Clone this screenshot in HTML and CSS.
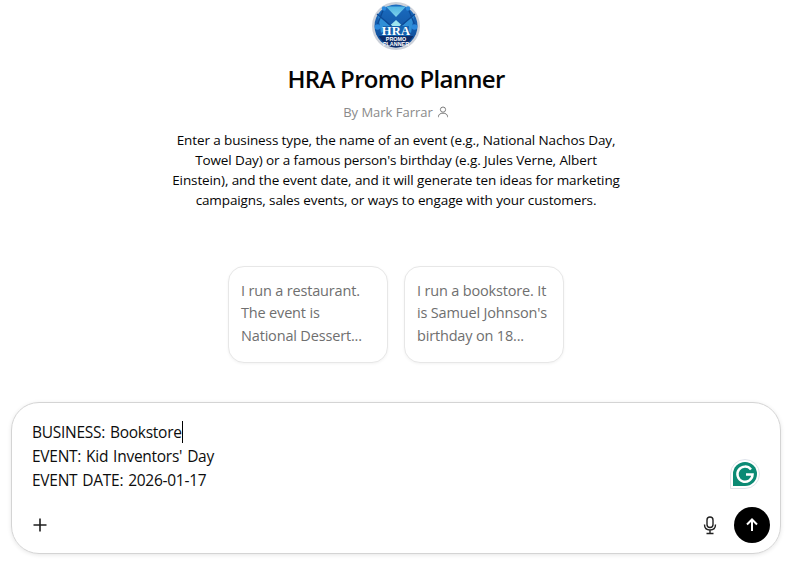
FILE: index.html
```html
<!DOCTYPE html>
<html lang="en">
<head>
<meta charset="utf-8">
<title>HRA Promo Planner</title>
<link rel="stylesheet" href="styles.css">
</head>
<body>
<main class="page">
  <header class="intro">
    <svg class="logo" width="48" height="48" viewBox="0 0 48 48" aria-hidden="true">
      <defs>
        <linearGradient id="disc" x1="0" y1="0" x2="0" y2="1"><stop offset="0" stop-color="#1a6cc0"/><stop offset="1" stop-color="#0f4a94"/></linearGradient>
        <linearGradient id="mail" x1="0" y1="0" x2="0" y2="1"><stop offset="0" stop-color="#4fb4e4"/><stop offset="1" stop-color="#7fd2ea"/></linearGradient>
      </defs>
      <circle cx="24" cy="24" r="24" fill="#ccd1da"/>
      <circle cx="24" cy="24" r="21.500" fill="url(#disc)"/>
      <path d="M14 4.500 H34 L24 15Z" fill="url(#mail)"/>
      <path d="M6 13 L18 24 L9 31Z M42 13 L30 24 L39 31Z" fill="#2f8fd6"/>
      <path d="M24 18 L36 29 H12Z" fill="#a0e6ef"/>
      <path d="M12 6 L4.500 25 M36 6 L43.500 25 M5 12 L24 28 L43 12" stroke="#0c4a96" stroke-width="1.300" fill="none"/>
      <circle cx="12" cy="6.500" r="2.200" fill="#2a88dc"/><circle cx="36" cy="6.500" r="2.200" fill="#2a88dc"/>
      <circle cx="5.500" cy="25" r="2.800" fill="#2a88dc"/><circle cx="42.500" cy="25" r="2.800" fill="#2a88dc"/>
      <rect x="11" y="24" width="26" height="10" fill="#1463b0"/>
      <path d="M6.500 34 H41.500 Q34 45.500 24 45.500 Q14 45.500 6.500 34Z" fill="#0c2c68"/>
      <text class="logo-hra" x="24" y="32.500" text-anchor="middle">HRA</text>
      <text class="logo-sub" x="24" y="39.200" text-anchor="middle">PROMO</text>
      <text class="logo-sub" x="24" y="44" text-anchor="middle">PLANNER</text>
    </svg>
    <h1 class="title">HRA Promo Planner</h1>
    <p class="byline">By Mark Farrar
      <svg class="byline-icon" width="12" height="12" viewBox="0 0 12 12" aria-hidden="true"><circle cx="6" cy="3.600" r="2.600"/><path d="M1.500 11.200v-.8c0-2 1.800-3.200 4.500-3.200s4.500 1.200 4.500 3.200v.8"/></svg>
    </p>
    <p class="description">Enter a business type, the name of an event (e.g., National Nachos Day, Towel Day) or a famous person's birthday (e.g. Jules Verne, Albert Einstein), and the event date, and it will generate ten ideas for marketing campaigns, sales events, or ways to engage with your customers.</p>
  </header>

  <section class="starters">
    <button class="starter" type="button"><span class="starter-text">I run a restaurant.<br>The event is<br>National Dessert...</span></button>
    <button class="starter" type="button"><span class="starter-text">I run a bookstore. It<br>is Samuel Johnson's<br>birthday on 18...</span></button>
  </section>

  <section class="composer">
    <div class="composer-text">
      <div><span class="caret-wrap">BUSINESS: Bookstore</span></div>
      <div>EVENT: Kid Inventors' Day</div>
      <div>EVENT DATE: 2026-01-17</div>
    </div>
    <div class="composer-bar">
      <svg class="plus" width="18" height="18" viewBox="0 0 18 18" aria-hidden="true"><path d="M9 2.500v13M2.500 9h13"/></svg>
      <div class="composer-actions">
        <svg class="mic" width="16" height="20" viewBox="0 0 16 20" aria-hidden="true"><rect x="5" y="2" width="6" height="10.500" rx="3"/><path d="M2.500 9.500c0 3.400 2.300 5.500 5.500 5.500s5.500-2.100 5.500-5.500M8 15v3M4.500 18.500h7"/></svg>
        <span class="send"><svg width="16" height="16" viewBox="0 0 16 16" aria-hidden="true"><path d="M8 14V2.500M3 7.500l5-5 5 5"/></svg></span>
      </div>
    </div>
    <span class="grammarly">
      <svg width="30" height="30" viewBox="0 0 30 30" aria-hidden="true">
        <path d="M15 .5A14.500 14.500 0 1 1 15 29.500H.5V15A14.500 14.500 0 0 1 15 .5Z" fill="#fff" stroke="#dfe3ea"/>
        <path d="M15 3A12 12 0 1 1 15 27H3V15A12 12 0 0 1 15 3Z" fill="#0b8a74"/>
        <path d="M21 10.500A7.600 7.600 0 1 0 22.600 15.500H16" fill="none" stroke="#fff" stroke-width="2.400"/>
      </svg>
    </span>
  </section>
</main>
</body>
</html>
```
FILE: styles.css
```css
* { box-sizing: border-box; }
html, body { margin: 0; height: 100%; background: #fff; }
body { font-family: "Open Sans", "Noto Sans", "Liberation Sans", sans-serif; color: #0d0d0d; overflow: hidden; }
.page { width: 787px; height: 561px; display: flex; flex-direction: column; align-items: center; padding: 2px 6px 7px 11px; }
.intro { flex: none; width: 450px; display: flex; flex-direction: column; align-items: center; text-align: center; }
.logo { display: block; }
.logo-hra { font: 700 12.500px "Liberation Serif", serif; fill: #fff; letter-spacing: .3px; }
.logo-sub { font: 700 5.400px "Liberation Sans", sans-serif; fill: #fff; }
.title { margin: 13px 0 0; font-size: 24px; line-height: 32px; font-weight: 600; letter-spacing: -.7px; color: #050505; }
.byline { margin: 7px 0 0; font-size: 13px; line-height: 20px; color: #8a8a8a; letter-spacing: -.02px; display: flex; align-items: center; gap: 4px; }
.byline-icon { fill: none; stroke: #7d7d7d; stroke-width: 1; }
.description { margin: 8px 0 0; font-size: 13.500px; line-height: 20px; letter-spacing: -.11px; color: #050505; }
.starters { flex: none; margin-top: 56px; display: flex; gap: 16px; }
.starter { width: 160px; height: 97px; padding: 12px 12px 14px; text-align: left; background: #fff; border: 1px solid #e7e7e7; border-radius: 16px; box-shadow: 0 1px 3px rgba(0,0,0,.05); font: inherit; }
.starter-text { display: block; font-size: 14.500px; line-height: 22.500px; letter-spacing: -.17px; color: #6f6f6f; white-space: nowrap; }
.composer { flex: none; position: relative; margin-top: 39px; width: 770px; height: 152px; border: 1px solid #d4d4d4; border-radius: 28px; box-shadow: 0 1px 4px rgba(0,0,0,.1); padding: 17px 10px 10px 20px; display: flex; flex-direction: column; justify-content: space-between; }
.composer-text { font-size: 15.500px; line-height: 24px; letter-spacing: -.27px; word-spacing: 1.200px; color: #0d0d0d; }
.caret-wrap { border-right: 1px solid #000; }
.composer-bar { display: flex; align-items: center; justify-content: space-between; }
.plus { margin-left: -1px; fill: none; stroke: #1f1f1f; stroke-width: 1.600; }
.composer-actions { display: flex; align-items: center; gap: 16px; }
.mic { fill: none; stroke: #222; stroke-width: 1.400; }
.send { width: 36px; height: 36px; border-radius: 50%; background: #000; display: flex; align-items: center; justify-content: center; }
.send svg { fill: none; stroke: #fff; stroke-width: 2; }
.grammarly { position: absolute; left: 718px; top: 56px; width: 30px; height: 30px; }
```
